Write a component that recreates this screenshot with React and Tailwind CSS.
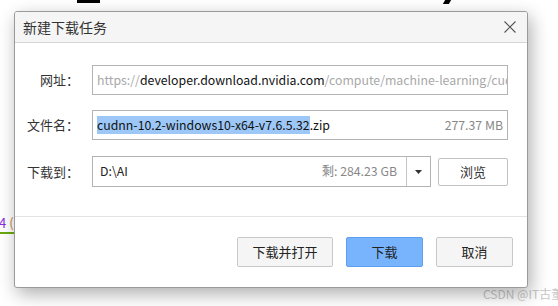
export default function App() {
  const font = { fontFamily: '"Noto Sans CJK SC", "Noto Sans", sans-serif' }
  return (
    <div className="relative w-[558px] h-[306px] bg-white overflow-hidden" style={font}>
      {/* things behind the dialog */}
      <div className="absolute left-[77px] top-0 w-[23px] h-[3px] bg-black" />
      <div className="absolute left-[444px] top-0 w-[6px] h-[4px] bg-black -skew-x-[30deg]" />
      <div className="absolute left-[-1px] top-[215px] text-[13px] leading-[16px]">
        <span className="text-[#8a2be2]">4</span> <span className="text-[#c08040]">(</span>
      </div>
      <div className="absolute left-0 top-[232px] w-[16px] h-[2px] bg-[#6aa80f]" />
      <div className="absolute left-[483px] top-[287px] text-[12px] leading-[14px] text-[#c9c9c9] whitespace-nowrap">
        CSDN @IT古董
      </div>

      {/* dialog */}
      <div className="absolute left-[14px] top-[11px] w-[514px] h-[277px] bg-white border border-[#9a9a9a] rounded-[3px] shadow-[3px_6px_18px_rgba(0,0,0,0.32)] flex flex-col overflow-hidden">
        <div className="h-[31px] bg-[#f5f5f5] border-b border-[#d6d6d6] flex items-center justify-between pl-[8px] pr-[11px] shrink-0">
          <span className="text-[14px] text-[#333]">新建下载任务</span>
          <svg width="12" height="12" viewBox="0 0 12 12" stroke="#555" strokeWidth="1.1">
            <path d="M0.5 0.5 L11.5 11.5 M11.5 0.5 L0.5 11.5" />
          </svg>
        </div>

        <div className="flex flex-col pt-[22px] pr-[19px] h-[174px] border-b border-[#e3e3e3] shrink-0">
          <div className="flex items-center h-[30px]">
            <label className="w-[64px] text-right text-[13px] text-[#333]">网址：</label>
            <div className="ml-[13px] flex-1 min-w-0 h-[30px] border border-[#b3b3b3] flex items-center px-[4px] overflow-hidden whitespace-nowrap text-[12.3px]">
              <span className="text-[#a8a8a8]">https://</span>
              <span className="text-[#111]">developer.download.nvidia.com</span>
              <span className="text-[#a8a8a8]">/compute/machine-learning/cudnn/secure/v7.6.5.32</span>
            </div>
          </div>

          <div className="flex items-center h-[30px] mt-[15px]">
            <label className="w-[64px] text-right text-[13px] text-[#333]">文件名：</label>
            <div className="ml-[13px] flex-1 min-w-0 h-[30px] border border-[#b3b3b3] flex items-center justify-between pl-[4px] pr-[4px] whitespace-nowrap text-[12.3px]">
              <span className="text-[#111]">
                <span className="bg-[#9cc7f7]">cudnn-10.2-windows10-x64-v7.6.5.32</span>.zip
              </span>
              <span className="text-[#888]">277.37 MB</span>
            </div>
          </div>

          <div className="flex items-center h-[31px] mt-[16px]">
            <label className="w-[64px] text-right text-[13px] text-[#333]">下载到：</label>
            <div className="ml-[13px] w-[339px] h-[31px] border border-[#b3b3b3] flex items-stretch whitespace-nowrap text-[12.3px]">
              <div className="flex-1 flex items-center justify-between pl-[7px] pr-[9px]">
                <span className="text-[#222]">D:\AI</span>
                <span className="text-[#888]">剩: 284.23 GB</span>
              </div>
              <div className="w-[24px] border-l border-[#c4c4c4] flex items-center justify-center">
                <svg width="7" height="4" viewBox="0 0 7 4"><path d="M0 0 H7 L3.5 4 Z" fill="#333" /></svg>
              </div>
            </div>
            <button className="ml-[7px] w-[70px] h-[28px] bg-white border border-[#c2c2c2] rounded-[2px] text-[13px] text-[#333]">浏览</button>
          </div>
        </div>

        <div className="flex-1 flex items-center justify-end gap-[13px] pr-[14px]">
          <button className="w-[96px] h-[30px] bg-[#f5f5f5] border border-[#c8c8c8] rounded-[2px] text-[13px] text-[#222]">下载并打开</button>
          <button className="w-[77px] h-[30px] bg-[#78b4fd] border border-[#5c9ef0] rounded-[2px] text-[13px] text-[#222]">下载</button>
          <button className="w-[77px] h-[30px] bg-[#f5f5f5] border border-[#c8c8c8] rounded-[2px] text-[13px] text-[#222]">取消</button>
        </div>
      </div>
    </div>
  )
}
